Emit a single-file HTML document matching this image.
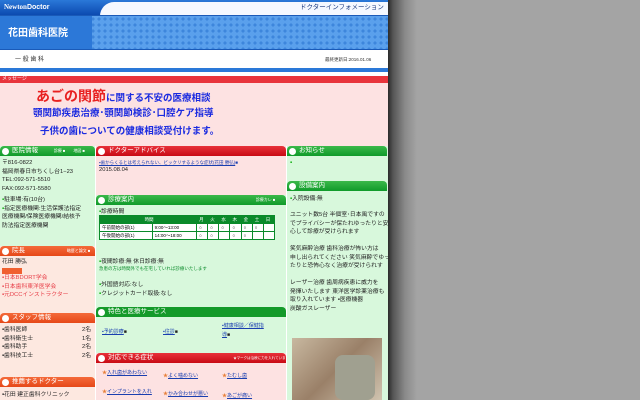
<!DOCTYPE html>
<html><head><meta charset="utf-8"><style>
*{margin:0;padding:0;box-sizing:border-box}
body{width:640px;height:400px;overflow:hidden;background:#a4a4a4;font-family:"Liberation Sans","Noto Sans CJK JP",sans-serif;position:relative}
.sh{position:absolute;left:387px;top:0;width:30px;height:400px;background:linear-gradient(90deg,#222,#555 20%,#8a8a8a 60%,#a4a4a4)}
#pg{position:absolute;left:0;top:0;width:388px;height:400px;background:#fff;overflow:hidden}
.a{position:absolute}
.t{font-size:5.8px;line-height:8px;color:#222;white-space:nowrap}
.gh,.rh,.oh{color:#fff;font-size:6.5px;line-height:10px;height:10px;padding-left:12px;border-radius:4px 4px 0 0;white-space:nowrap;overflow:hidden}
.gh{background:linear-gradient(#3bb84a,#109a2a)}
.rh{background:linear-gradient(#e8313a,#c80a14)}
.oh{background:linear-gradient(#f46a3a,#e64818)}
.ic{position:absolute;left:2px;top:1.5px;width:7px;height:7px;border-radius:50%;background:#fff}
.lk{color:#1a3fb0;text-decoration:underline}
td{border:1px solid #0a8a2a;background:#fff;font-size:4.5px;height:8px;padding-left:2px}
</style></head><body>
<div class="sh"></div>
<div id="pg">
<div class="a" style="left:0;top:0;width:388px;height:15px;background:linear-gradient(#2a78d8,#0c4ab0)"></div>
<div class="a" style="left:100px;top:2px;width:288px;height:14px;background:#f4f8ff;border-radius:14px 0 0 0"></div>
<div class="a t" style="left:4px;top:3px;color:#fff;font-size:7px;font-weight:bold;font-family:'Liberation Serif',serif">Newton<span style="font-family:'Liberation Sans'">Doctor</span></div>
<div class="a t" style="left:300px;top:4px;font-size:6.5px;color:#1a3a80">ドクターインフォメーション</div>
<div class="a" style="left:0;top:15px;width:388px;height:35px;background:#5aa0ec;background-image:radial-gradient(#3d86dc 35%,transparent 40%);background-size:6px 6px;border-top:1px solid #1a5ab8;border-bottom:1px solid #1a5ab8"></div>
<div class="a" style="left:0;top:16px;width:92px;height:33px;background:#2c78d8"></div>
<div class="a t" style="left:8px;top:28px;color:#fff;font-size:10px;line-height:12px;font-weight:bold">花田歯科医院</div>
<div class="a t" style="left:15px;top:56px;font-size:6px;color:#333">一 般 歯 科</div>
<div class="a t" style="left:325px;top:56px;font-size:4.5px;color:#333">最終更新日:2016.01.06</div>
<div class="a" style="left:0;top:68px;width:388px;height:4px;background:#2a78d8"></div>
<div class="a" style="left:0;top:76px;width:388px;height:7px;background:#e8343c"></div>
<div class="a t" style="left:2px;top:75px;color:#fff;font-size:5px">メッセージ</div>
<div class="a" style="left:0;top:83px;width:388px;height:63px;background:#fde2e2"></div>
<div class="a t" style="left:36px;top:88px;font-size:14px;line-height:16px;color:#e82020;font-weight:bold">あごの関節<span style="font-size:9.5px;color:#1a2ae0">に関する不安の医療相談</span></div>
<div class="a t" style="left:33px;top:108px;font-size:9.5px;line-height:12px;color:#1a2ae0;font-weight:bold">顎関節疾患治療･顎関節検診･口腔ケア指導</div>
<div class="a t" style="left:40px;top:126px;font-size:9.5px;line-height:12px;color:#1a2ae0;font-weight:bold">子供の歯についての健康相談受付けます。</div>

<div class="a" style="left:0;top:146px;width:95px;height:100px;background:#d8f8dc"></div>
<div class="a gh" style="left:0;top:146px;width:95px"><i class="ic"></i>医院情報 <span style="font-size:4px;margin-left:14px">診療 ■　　地図 ■</span></div>
<div class="a t" style="left:2px;top:159px;line-height:8.5px">〒816-0822<br>福岡県春日市ちくし台1−23<br>TEL:092-571-5510<br>FAX:092-571-5580</div>
<div class="a t" style="left:2px;top:196px;line-height:8.5px"><span style="color:#0a0">▪</span>駐車場:有(10台)<br><span style="color:#0a0">▪</span>指定医療機関:生活保護法指定<br>医療機関/保険医療機関/結核予<br>防法指定医療機関</div>
<div class="a" style="left:0;top:246px;width:95px;height:154px;background:#fde8e0"></div>
<div class="a oh" style="left:0;top:246px;width:95px"><i class="ic"></i>院長 <span style="font-size:4px;margin-left:40px">略歴と論文 ■</span></div>
<div class="a t" style="left:2px;top:258px">花田 勝弘</div>
<div class="a" style="left:2px;top:268px;width:20px;height:6px;background:#f06030"></div>
<div class="a t" style="left:2px;top:274px;color:#e8404a;line-height:8.5px">▪日本BDORT学会<br>▪日本歯科東洋医学会<br>▪元DCCインストラクター</div>
<div class="a oh" style="left:0;top:313px;width:95px"><i class="ic"></i>スタッフ情報</div>
<div class="a t" style="left:2px;top:326px;line-height:8.5px">▪歯科医師<br>▪歯科衛生士<br>▪歯科助手<br>▪歯科技工士</div>
<div class="a t" style="left:82px;top:326px;line-height:8.5px">2名<br>1名<br>2名<br>2名</div>
<div class="a oh" style="left:0;top:377px;width:95px"><i class="ic"></i>推薦するドクター</div>
<div class="a t" style="left:2px;top:391px">▪花田 建正歯科クリニック</div>

<div class="a" style="left:96px;top:146px;width:190px;height:49px;background:#fde2e2"></div>
<div class="a rh" style="left:96px;top:146px;width:190px"><i class="ic"></i>ドクターアドバイス</div>
<div class="a t" style="left:99px;top:159px;font-size:4.5px"><span class="lk">▪歯からくるとは考えられない、ビックリするような症状(花田 勝弘)</span><span style="color:#1a3fb0">■</span></div>
<div class="a t" style="left:99px;top:166px">2015.08.04</div>
<div class="a" style="left:96px;top:195px;width:190px;height:112px;background:#d8f8dc"></div>
<div class="a gh" style="left:96px;top:195px;width:190px"><i class="ic"></i>診療案内 <span style="font-size:4px;margin-left:120px">診療カレ ■</span></div>
<div class="a t" style="left:99px;top:208px"><span style="color:#0a0">▪</span>診療時間</div>
<table class="a" style="left:99px;top:215px;width:176px;border-collapse:collapse">
<tr><td colspan="2" style="background:#0a8a2a;color:#fff;text-align:center">時間</td><td style="background:#0a8a2a;color:#fff">月</td><td style="background:#0a8a2a;color:#fff">火</td><td style="background:#0a8a2a;color:#fff">水</td><td style="background:#0a8a2a;color:#fff">木</td><td style="background:#0a8a2a;color:#fff">金</td><td style="background:#0a8a2a;color:#fff">土</td><td style="background:#0a8a2a;color:#fff">日</td></tr>
<tr><td>午前開始の部(1)</td><td>9:00～13:00</td><td>○</td><td>○</td><td>○</td><td>○</td><td>○</td><td>○</td><td></td></tr>
<tr><td>午後開始の部(1)</td><td>14:00～18:00</td><td>○</td><td>○</td><td></td><td>○</td><td>○</td><td></td><td></td></tr></table>
<div class="a t" style="left:99px;top:258px"><span style="color:#0a0">▪</span>夜間診療:無 休日診療:無</div>
<div class="a t" style="left:99px;top:265px;color:#0a8a2a;font-size:4.5px">急患の方は時間外でも在宅していれば診療いたします</div>
<div class="a t" style="left:99px;top:281px;line-height:9px"><span style="color:#0a0">▪</span>外国語対応:なし<br><span style="color:#0a0">▪</span>クレジットカード取扱:なし</div>
<div class="a" style="left:96px;top:307px;width:190px;height:46px;background:#d8f8dc"></div>
<div class="a gh" style="left:96px;top:307px;width:190px;background:#149a2a"><i class="ic"></i>特色と医療サービス</div>
<div class="a t" style="left:102px;top:328px;font-size:5px"><span class="lk">▪予約診療</span>■</div>
<div class="a t" style="left:163px;top:328px;font-size:5px"><span class="lk">▪往診</span>■</div>
<div class="a t" style="left:222px;top:322px;font-size:5px;line-height:9px"><span class="lk">▪健康相談／保健指</span><br><span class="lk">導</span>■</div>
<div class="a" style="left:96px;top:353px;width:190px;height:47px;background:#fde2e2"></div>
<div class="a rh" style="left:96px;top:353px;width:190px"><i class="ic"></i>対応できる症状 <span style="font-size:3.5px;margin-left:78px">★マークは治療に力を入れています</span></div>
<div class="a t" style="left:102px;top:369px;font-size:5px;color:#e8803a">★<span class="lk">入れ歯があわない</span></div>
<div class="a t" style="left:163px;top:372px;font-size:5px;color:#e8803a">★<span class="lk">よく噛めない</span></div>
<div class="a t" style="left:222px;top:372px;font-size:5px;color:#e8803a">★<span class="lk">たむし歯</span></div>
<div class="a t" style="left:102px;top:388px;font-size:5px;color:#e8803a">★<span class="lk">インプラントを入れ</span></div>
<div class="a t" style="left:163px;top:390px;font-size:5px;color:#e8803a">★<span class="lk">かみ合わせが悪い</span></div>
<div class="a t" style="left:222px;top:392px;font-size:5px;color:#e8803a">★<span class="lk">あごが痛い</span></div>

<div class="a" style="left:287px;top:146px;width:101px;height:254px;background:#d8f8dc"></div>
<div class="a gh" style="left:287px;top:146px;width:100px"><i class="ic"></i>お知らせ</div>
<div class="a t" style="left:290px;top:159px;color:#0a0">▪</div>
<div class="a gh" style="left:287px;top:181px;width:100px"><i class="ic"></i>設備案内</div>
<div class="a t" style="left:290px;top:195px"><span style="color:#0a0">▪</span>入院設備:無</div>
<div class="a t" style="left:290px;top:211px;line-height:8.5px">ユニット数5台 半個室･日本風ですの<br>でプライバシーが保たれゆったりと安<br>心して診療が受けられます<br><br>笑気麻酔治療 歯科治療が怖い方は<br>申し出られてください 笑気麻酔でゆっ<br>たりと恐怖心なく治療が受けられす<br><br>レーザー治療 歯周病疾患に威力を<br>発揮いたします 東洋医学診薬治療も<br>取り入れています ▪医療機器<br>炭酸ガスレーザー</div>
<div class="a" style="left:292px;top:338px;width:90px;height:62px;background:linear-gradient(135deg,#c8b8a0,#9a8068 50%,#d0c4b0)"></div>
<div class="a" style="left:335px;top:355px;width:40px;height:45px;background:#a0a090;border-radius:8px"></div>
</div>
</body></html>
